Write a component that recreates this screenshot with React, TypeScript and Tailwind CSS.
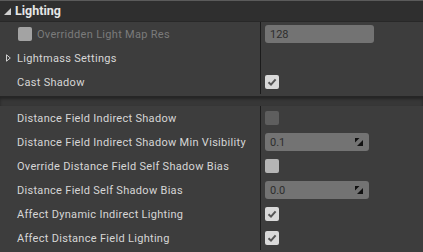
import React from "react";

type Row = {
  label: string;
  value?: React.ReactNode;
};

function Check({ checked, tone = "light" }: { checked?: boolean; tone?: "light" | "dim" | "dark" }) {
  const bg = tone === "dark" ? "bg-[#5e5e5e]" : tone === "dim" ? "bg-[#a3a3a3]" : checked ? "bg-[#d9d9d9]" : "bg-[#b5b5b5]";
  return (
    <div className={`w-[14px] h-[14px] rounded-[2px] flex items-center justify-center ${bg}`}>
      {checked && (
        <svg width="10" height="10" viewBox="0 0 10 10">
          <path d="M1.5 5.2 L4 7.6 L8.6 2.4" fill="none" stroke="#555" strokeWidth="2" />
        </svg>
      )}
    </div>
  );
}

function NumField({ value, w = "w-[104px]", spin = true }: { value: string; w?: string; spin?: boolean }) {
  return (
    <div className={`${w} h-[18px] rounded-[3px] bg-[#737373] flex items-center justify-between pl-[5px] pr-[6px] text-[#2e2e2e]`}>
      <span>{value}</span>
      {spin && (
        <svg width="8" height="8" viewBox="0 0 8 8">
          <path d="M0 0 H4.5 L0 4.5 Z" fill="#111" />
          <path d="M8 8 H2 L8 2 Z" fill="#111" />
        </svg>
      )}
    </div>
  );
}

function PropRow({ label, value, left }: { label: React.ReactNode; value?: React.ReactNode; left?: string }) {
  return (
    <div className="flex h-[24px]">
      <div className={`w-[260px] flex items-center ${left ?? "pl-[17px]"} text-[#d6d6d6] whitespace-nowrap overflow-hidden tracking-[0.3px]`}>
        {label}
      </div>
      <div className="w-px bg-[#1b1b1b]" />
      <div className="flex-1 flex items-center pl-[4px]">{value}</div>
    </div>
  );
}

export default function App() {
  const rows: Row[] = [
    { label: "Distance Field Indirect Shadow", value: <Check tone="dark" /> },
    { label: "Distance Field Indirect Shadow Min Visibility", value: <NumField value="0.1" /> },
    { label: "Override Distance Field Self Shadow Bias", value: <Check /> },
    { label: "Distance Field Self Shadow Bias", value: <NumField value="0.0" /> },
    { label: "Affect Dynamic Indirect Lighting", value: <Check checked /> },
    { label: "Affect Distance Field Lighting", value: <Check checked /> },
  ];

  return (
    <div
      className="w-[423px] h-[252px] overflow-hidden bg-[#3d3d3d] text-[11px] leading-none"
      style={{ fontFamily: "Roboto, 'Liberation Sans', sans-serif" }}
    >
      {/* HEADER */}
      <div className="h-px bg-[#5b5b5b]" />
      <div className="h-[21px] bg-[#2f2f2f] flex items-center pl-[4px] gap-[4px] border-b border-[#282828]">
        <svg width="7" height="7" viewBox="0 0 7 7">
          <path d="M7 0 V7 H0 Z" fill="#cfcfcf" />
        </svg>
        <span className="text-[12.5px] font-bold text-[#e6e6e6]">Lighting</span>
      </div>

      {/* SECTION 1 */}
      <div className="pb-[2px]">
        <PropRow
          left="pl-[18px]"
          label={
            <div className="flex items-center gap-[5px] text-[#7b7b7b]">
              <Check tone="dim" />
              <span>Overridden Light Map Res</span>
            </div>
          }
          value={<NumField value="128" w="w-[109px]" spin={false} />}
        />
        <PropRow
          left="pl-[6px]"
          label={
            <div className="flex items-center gap-[6px]">
              <svg width="5" height="8" viewBox="0 0 5 8">
                <path d="M0.5 0.8 L4.3 4 L0.5 7.2 Z" fill="none" stroke="#cfcfcf" strokeWidth="1" />
              </svg>
              <span>Lightmass Settings</span>
            </div>
          }
        />
        <PropRow label="Cast Shadow" value={<Check checked />} />
      </div>

      {/* SEPARATOR */}
      <div className="h-[10px] bg-[#373737] border-t border-[#262626] shadow-[inset_0_2px_3px_rgba(0,0,0,0.35)]" />

      {/* SECTION 2 */}
      <div>
        {rows.map((r) => (
          <PropRow key={r.label} label={r.label} value={r.value} />
        ))}
      </div>
    </div>
  );
}
